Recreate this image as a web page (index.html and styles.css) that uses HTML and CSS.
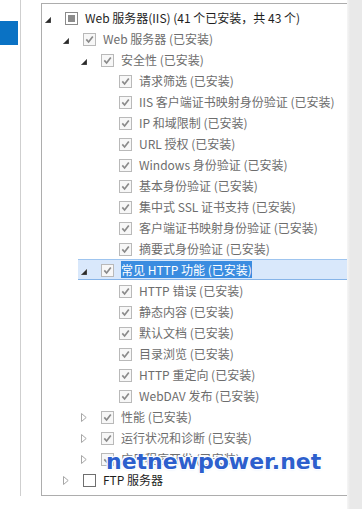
FILE: index.html
```html
<!DOCTYPE html>
<html lang="zh-CN">
<head>
<meta charset="utf-8">
<title>角色服务</title>
<link rel="stylesheet" href="styles.css">
</head>
<body>
<div class="screen">
  <aside class="side"><div class="side-item"></div></aside>
  <main class="main">
    <div class="tree">
      <div class="row l0 on"><span class="tg"><svg class="tri-open" width="6" height="6" viewBox="0 0 6 6"><polygon points="6,0 6,6 0,6"/></svg></span><span class="cb cb-mixed"><i></i></span><span class="lb">Web 服务器(IIS) (41 个已安装，共 43 个)</span></div>
      <div class="row l1 on"><span class="tg"><svg class="tri-open" width="6" height="6" viewBox="0 0 6 6"><polygon points="6,0 6,6 0,6"/></svg></span><span class="cb cb-dis"><svg width="11" height="11" viewBox="0 0 11 11"><path d="M2.3 5.4 L4.6 8 L8.8 2.6"/></svg></span><span class="lb dim">Web 服务器 (已安装)</span></div>
      <div class="row l2 on"><span class="tg"><svg class="tri-open" width="6" height="6" viewBox="0 0 6 6"><polygon points="6,0 6,6 0,6"/></svg></span><span class="cb cb-dis"><svg width="11" height="11" viewBox="0 0 11 11"><path d="M2.3 5.4 L4.6 8 L8.8 2.6"/></svg></span><span class="lb dim">安全性 (已安装)</span></div>
      <div class="row l3"><span class="tg"></span><span class="cb cb-dis"><svg width="11" height="11" viewBox="0 0 11 11"><path d="M2.3 5.4 L4.6 8 L8.8 2.6"/></svg></span><span class="lb dim">请求筛选 (已安装)</span></div>
      <div class="row l3"><span class="tg"></span><span class="cb cb-dis"><svg width="11" height="11" viewBox="0 0 11 11"><path d="M2.3 5.4 L4.6 8 L8.8 2.6"/></svg></span><span class="lb dim">IIS 客户端证书映射身份验证 (已安装)</span></div>
      <div class="row l3"><span class="tg"></span><span class="cb cb-dis"><svg width="11" height="11" viewBox="0 0 11 11"><path d="M2.3 5.4 L4.6 8 L8.8 2.6"/></svg></span><span class="lb dim">IP 和域限制 (已安装)</span></div>
      <div class="row l3"><span class="tg"></span><span class="cb cb-dis"><svg width="11" height="11" viewBox="0 0 11 11"><path d="M2.3 5.4 L4.6 8 L8.8 2.6"/></svg></span><span class="lb dim">URL 授权 (已安装)</span></div>
      <div class="row l3"><span class="tg"></span><span class="cb cb-dis"><svg width="11" height="11" viewBox="0 0 11 11"><path d="M2.3 5.4 L4.6 8 L8.8 2.6"/></svg></span><span class="lb dim">Windows 身份验证 (已安装)</span></div>
      <div class="row l3"><span class="tg"></span><span class="cb cb-dis"><svg width="11" height="11" viewBox="0 0 11 11"><path d="M2.3 5.4 L4.6 8 L8.8 2.6"/></svg></span><span class="lb dim">基本身份验证 (已安装)</span></div>
      <div class="row l3"><span class="tg"></span><span class="cb cb-dis"><svg width="11" height="11" viewBox="0 0 11 11"><path d="M2.3 5.4 L4.6 8 L8.8 2.6"/></svg></span><span class="lb dim">集中式 SSL 证书支持 (已安装)</span></div>
      <div class="row l3"><span class="tg"></span><span class="cb cb-dis"><svg width="11" height="11" viewBox="0 0 11 11"><path d="M2.3 5.4 L4.6 8 L8.8 2.6"/></svg></span><span class="lb dim">客户端证书映射身份验证 (已安装)</span></div>
      <div class="row l3"><span class="tg"></span><span class="cb cb-dis"><svg width="11" height="11" viewBox="0 0 11 11"><path d="M2.3 5.4 L4.6 8 L8.8 2.6"/></svg></span><span class="lb dim">摘要式身份验证 (已安装)</span></div>
      <div class="row l2 on sel"><span class="tg"><svg class="tri-open" width="6" height="6" viewBox="0 0 6 6"><polygon points="6,0 6,6 0,6"/></svg></span><span class="cb cb-dis"><svg width="11" height="11" viewBox="0 0 11 11"><path d="M2.3 5.4 L4.6 8 L8.8 2.6"/></svg></span><span class="lb hl">常见 HTTP 功能 (已安装)</span></div>
      <div class="row l3"><span class="tg"></span><span class="cb cb-dis"><svg width="11" height="11" viewBox="0 0 11 11"><path d="M2.3 5.4 L4.6 8 L8.8 2.6"/></svg></span><span class="lb dim">HTTP 错误 (已安装)</span></div>
      <div class="row l3"><span class="tg"></span><span class="cb cb-dis"><svg width="11" height="11" viewBox="0 0 11 11"><path d="M2.3 5.4 L4.6 8 L8.8 2.6"/></svg></span><span class="lb dim">静态内容 (已安装)</span></div>
      <div class="row l3"><span class="tg"></span><span class="cb cb-dis"><svg width="11" height="11" viewBox="0 0 11 11"><path d="M2.3 5.4 L4.6 8 L8.8 2.6"/></svg></span><span class="lb dim">默认文档 (已安装)</span></div>
      <div class="row l3"><span class="tg"></span><span class="cb cb-dis"><svg width="11" height="11" viewBox="0 0 11 11"><path d="M2.3 5.4 L4.6 8 L8.8 2.6"/></svg></span><span class="lb dim">目录浏览 (已安装)</span></div>
      <div class="row l3"><span class="tg"></span><span class="cb cb-dis"><svg width="11" height="11" viewBox="0 0 11 11"><path d="M2.3 5.4 L4.6 8 L8.8 2.6"/></svg></span><span class="lb dim">HTTP 重定向 (已安装)</span></div>
      <div class="row l3"><span class="tg"></span><span class="cb cb-dis"><svg width="11" height="11" viewBox="0 0 11 11"><path d="M2.3 5.4 L4.6 8 L8.8 2.6"/></svg></span><span class="lb dim">WebDAV 发布 (已安装)</span></div>
      <div class="row l2"><span class="tg"><svg class="tri-closed" width="6" height="9" viewBox="0 0 6 9"><polygon points="0.5,0.5 5.2,4.5 0.5,8.5"/></svg></span><span class="cb cb-dis"><svg width="11" height="11" viewBox="0 0 11 11"><path d="M2.3 5.4 L4.6 8 L8.8 2.6"/></svg></span><span class="lb dim">性能 (已安装)</span></div>
      <div class="row l2"><span class="tg"><svg class="tri-closed" width="6" height="9" viewBox="0 0 6 9"><polygon points="0.5,0.5 5.2,4.5 0.5,8.5"/></svg></span><span class="cb cb-dis"><svg width="11" height="11" viewBox="0 0 11 11"><path d="M2.3 5.4 L4.6 8 L8.8 2.6"/></svg></span><span class="lb dim">运行状况和诊断 (已安装)</span></div>
      <div class="row l2"><span class="tg"><svg class="tri-closed" width="6" height="9" viewBox="0 0 6 9"><polygon points="0.5,0.5 5.2,4.5 0.5,8.5"/></svg></span><span class="cb cb-dis"><svg width="11" height="11" viewBox="0 0 11 11"><path d="M2.3 5.4 L4.6 8 L8.8 2.6"/></svg></span><span class="lb dim">应用程序开发 (已安装)</span></div>
      <div class="row l1"><span class="tg"><svg class="tri-closed" width="6" height="9" viewBox="0 0 6 9"><polygon points="0.5,0.5 5.2,4.5 0.5,8.5"/></svg></span><span class="cb cb-off"></span><span class="lb">FTP 服务器</span></div>
    </div>
    <div class="wm">netnewpower.net</div>
  </main>
  <div class="rail"></div>
</div>
</body>
</html>
```

FILE: styles.css
```css
html, body {
  margin: 0;
  padding: 0;
  background: #ffffff;
}

body {
  font-family: "Noto Sans CJK SC", "Noto Sans", sans-serif;
  font-size: 12px;
  color: #1e1e1e;
}

.screen {
  display: flex;
  width: 362px;
  height: 509px;
  overflow: hidden;
  position: relative;
}

.side {
  width: 20px;
  height: 496px;
  border-right: 1px solid #cfcfcf;
  flex: none;
}

.side-item {
  width: 18px;
  height: 24px;
  margin-top: 21px;
  background: #0a72c4;
}

.main {
  flex: 1;
  position: relative;
  padding: 3px 0 0 20px;
}

.tree {
  box-sizing: border-box;
  width: 306px;
  height: 493px;
  border: 1px solid #adadad;
  border-right: none;
  padding-top: 3px;
}

.row {
  display: flex;
  align-items: center;
  box-sizing: border-box;
  height: 21px;
  white-space: nowrap;
}

.l0 { margin-left: 0; }
.l1 { margin-left: 18px; }
.l2 { margin-left: 36px; }
.l3 { margin-left: 54px; }

.tg {
  flex: none;
  box-sizing: border-box;
  width: 23px;
  height: 21px;
  padding-left: 3px;
  display: flex;
  align-items: center;
}

.tri-open {
  display: block;
  margin-top: 5px;
}

.tri-open polygon {
  fill: #2a2a2a;
  stroke: #7d7d7d;
  stroke-width: 0.6;
}

.tri-closed {
  display: block;
  margin-top: 1px;
}

.tri-closed polygon {
  fill: #ffffff;
  stroke: #a6a6a6;
  stroke-width: 1;
}

.cb {
  flex: none;
  box-sizing: border-box;
  width: 13px;
  height: 13px;
  margin-right: 7px;
  margin-top: 1px;
  display: flex;
  align-items: center;
  justify-content: center;
  background: #ffffff;
}

.cb-dis {
  border: 1px solid #b9b9b9;
  background: #f7f7f7;
}

.cb-dis svg {
  display: block;
}

.cb-dis path {
  fill: none;
  stroke: #8a8a8a;
  stroke-width: 1.7;
}

.cb-mixed {
  border: 1px solid #8a8a8a;
}

.cb-mixed i {
  display: block;
  width: 7px;
  height: 7px;
  background: #8c8c8c;
}

.cb-off {
  border: 1px solid #6f6f6f;
}

.lb {
  line-height: 17px;
}

.dim {
  color: #6d6d6d;
}

.sel {
  background: #d9e8fb;
  border-top: 1px solid #9fc5ef;
  border-bottom: 1px solid #86b4e8;
}

.hl {
  background: #3a8ce0;
  color: #ffffff;
}

.wm {
  position: absolute;
  left: 85px;
  top: 451px;
  font-family: "DejaVu Sans", sans-serif;
  font-weight: bold;
  font-size: 22px;
  line-height: 22px;
  color: #2d5fcd;
  white-space: nowrap;
  text-shadow:
    1px 1px 0 #ffffff,
    -1px -1px 0 #ffffff,
    1px -1px 0 #ffffff,
    -1px 1px 0 #ffffff,
    0 0 3px #b8d0f5;
}

.rail {
  flex: none;
  width: 15px;
  height: 509px;
  background: linear-gradient(to right, #f6f6f6 0, #e9e9e9 3px, #e9e9e9 100%);
}
```
